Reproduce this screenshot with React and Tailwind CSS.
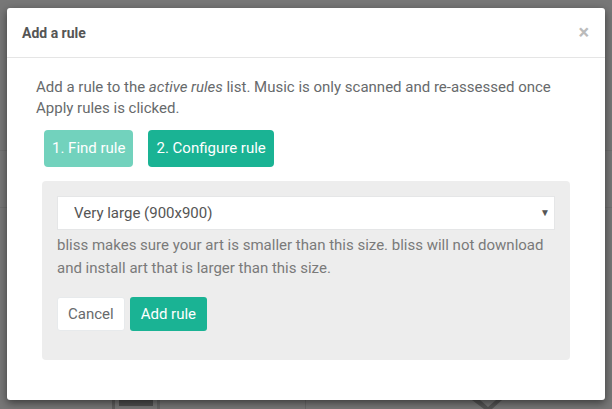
import React, { useState } from "react";

const sizes = [
  "Small (300x300)",
  "Medium (500x500)",
  "Large (700x700)",
  "Very large (900x900)",
];

export default function App() {
  const [size, setSize] = useState("Very large (900x900)");

  return (
    <div
      className="relative w-[612px] h-[409px] overflow-hidden bg-[#777777]"
      style={{ fontFamily: "Roboto, 'Liberation Sans', sans-serif" }}
    >
      {/* page content dimmed behind the backdrop */}
      <div className="absolute inset-0 pointer-events-none">
        <div className="absolute left-0 right-0 top-[150px] h-px bg-[#6f6f6f]" />
        <div className="absolute left-0 right-0 top-[207px] h-px bg-[#6f6f6f]" />
        <div className="absolute left-[112px] top-[400px] w-[3px] h-[9px] bg-[#5e5e5e]" />
        <div className="absolute left-[119px] top-[400px] w-[34px] h-[6px] bg-[#4f4f4f]" />
        <div className="absolute left-[157px] top-[400px] w-[3px] h-[9px] bg-[#666666]" />
        <div className="absolute left-[305px] top-[400px] w-px h-[9px] bg-[#6a6a6a]" />
        <svg
          className="absolute left-[472px] top-[400px]"
          width="32"
          height="9"
          viewBox="0 0 32 9"
        >
          <path d="M0 0 L12 9 L20 9 L30 0 L24 0 L16 7 L8 0 Z" fill="#555" />
        </svg>
      </div>

      {/* modal */}
      <div className="relative pt-[8px] px-[7px]">
        <div className="w-[598px] h-[392px] bg-white rounded-[3px] shadow-[0_3px_9px_rgba(0,0,0,0.5)] flex flex-col">
          <div className="flex items-center justify-between h-[50px] pt-[2px] pl-[15px] pr-[16px] border-b border-[#e5e5e5]">
            <h4 className="text-[14px] font-bold text-[#555555]">Add a rule</h4>
            <button className="text-[#bbbbbb] text-[20px] font-bold leading-none -mt-[3px]">
              ×
            </button>
          </div>

          <div className="px-[29px] pt-[19px]">
            <p className="text-[15px] leading-[21px] text-[#676a6c]">
              Add a rule to the <em>active rules</em> list. Music is only
              scanned and re-assessed once Apply rules is clicked.
            </p>

            <div className="flex gap-[15px] mt-[11px] pl-[8px]">
              <button className="h-[37px] px-[8px] rounded-[4px] bg-[#72d2bd] text-white text-[15px]">
                1. Find rule
              </button>
              <button className="h-[37px] px-[8px] rounded-[4px] bg-[#1ab394] text-white text-[15px]">
                2. Configure rule
              </button>
            </div>

            <div className="mt-[14px] ml-[6px] w-[528px] h-[179px] bg-[#ededed] rounded-[4px] px-[15px] pt-[15px]">
              <div className="relative">
                <select
                  value={size}
                  onChange={(e) => setSize(e.target.value)}
                  className="appearance-none w-full h-[34px] bg-white border border-[#e5e6e7] pl-[16px] text-[15px] text-[#555555] outline-none"
                >
                  {sizes.map((s) => (
                    <option key={s}>{s}</option>
                  ))}
                </select>
                <span className="absolute right-[5px] top-[9px] text-[10px] text-[#555555] pointer-events-none">
                  ▼
                </span>
              </div>

              <p className="mt-[4px] text-[15px] leading-[23px] text-[#7a7a7a]">
                bliss makes sure your art is smaller than this size. bliss will
                not download and install art that is larger than this size.
              </p>

              <div className="flex gap-[5px] mt-[17px]">
                <button className="h-[34px] px-[10px] rounded-[3px] bg-white border border-[#e7eaec] text-[15px] text-[#676a6c]">
                  Cancel
                </button>
                <button className="h-[34px] px-[11px] rounded-[3px] bg-[#1ab394] text-white text-[15px]">
                  Add rule
                </button>
              </div>
            </div>
          </div>
        </div>
      </div>
    </div>
  );
}
